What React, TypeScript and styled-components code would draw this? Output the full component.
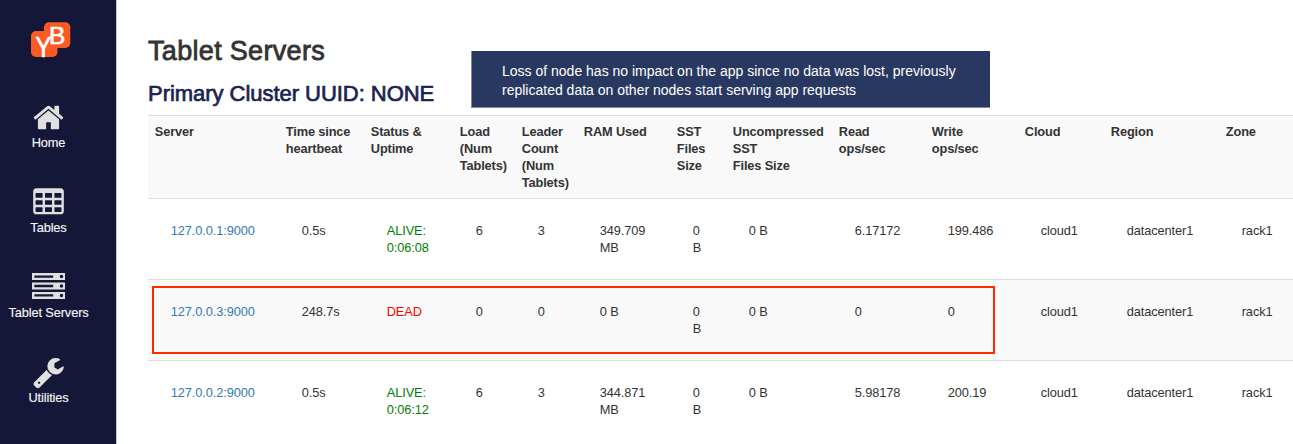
import React from "react";
import styled, { createGlobalStyle } from "styled-components";

const GlobalStyle = createGlobalStyle`
  * { box-sizing: border-box; }
  body {
    margin: 0;
    background: #fff;
    color: #333;
    font: 12.8px/17px "Liberation Sans", Arial, sans-serif;
    letter-spacing: -0.09px;
    overflow: hidden;
  }
`;

const Page = styled.div`
  display: flex;
  height: 444px;
  overflow: hidden;
`;

const Sidebar = styled.nav`
  flex: none;
  width: 117px;
  padding: 20px 19px 0 0;
  background: #141737;
  border-right: 1px solid #c9c9d2;
  display: flex;
  flex-direction: column;
`;

const Logo = styled.svg`
  width: 44px;
  height: 40px;
  margin-left: 29px;
  flex: none;
  overflow: visible;
  letter-spacing: 0;
`;

const NavList = styled.div`
  display: flex;
  flex-direction: column;
  padding-top: 41px;
`;

const NavItem = styled.a`
  height: 85px;
  display: flex;
  flex-direction: column;
  align-items: center;
  color: #f4f4f6;
  white-space: nowrap;
  letter-spacing: -0.12px;
  -webkit-text-stroke: 0.15px currentColor;
`;

const NavIcon = styled.svg`
  width: 33px;
  height: 33px;
  flex: none;
  fill: #e0e0e0;
`;

const Main = styled.main`
  flex: none;
  width: 1176px;
  padding-left: 31px;
`;

const Heading = styled.header`
  position: relative;
  height: 115px;
  padding-top: 34px;
`;

const Title = styled.h1`
  margin: 0;
  font-size: 27px;
  line-height: 34px;
  font-weight: 400;
  letter-spacing: 0.32px;
  color: #333;
  -webkit-text-stroke: 0.8px currentColor;
`;

const Subtitle = styled.h2`
  margin: 12px 0 0;
  font-size: 22px;
  line-height: 28px;
  font-weight: 400;
  letter-spacing: -0.04px;
  color: #1a2350;
  -webkit-text-stroke: 0.7px currentColor;
`;

const Callout = styled.p`
  position: absolute;
  left: 323px;
  top: 51px;
  width: 519px;
  height: 57px;
  margin: 0;
  padding: 11px 0 0 30px;
  background: #293861;
  border-left: 1px solid #8089a5;
  border-bottom: 1px solid #8089a5;
  color: #fff;
  font-size: 14px;
  line-height: 18.5px;
  letter-spacing: 0;
  white-space: pre-line;
`;

const Table = styled.table`
  table-layout: fixed;
  width: 1145px;
  border-collapse: separate;
  border-spacing: 0;
`;

const Row = styled.tr<{ $shaded?: boolean }>`
  position: relative;
  background: ${(p) => (p.$shaded ? "#f9f9f9" : "#fff")};
`;

const HeadCell = styled.th`
  height: 83px;
  padding: 7px 0 7px 6.8px;
  border-top: 1px solid #ddd;
  text-align: left;
  vertical-align: top;
  font-weight: 700;
  letter-spacing: -0.14px;
  white-space: pre;
`;

const Cell = styled.td`
  height: 81px;
  padding: 23px 0 0 22.700px;
  border-top: 1px solid #ddd;
  vertical-align: top;
  white-space: pre;
`;

const ServerLink = styled.a`
  color: #337ab7;
`;

const Status = styled.span<{ $alive: boolean }>`
  color: ${(p) => (p.$alive ? "green" : "red")};
`;

const Highlight = styled.div`
  position: absolute;
  left: 4px;
  top: 7px;
  width: 843px;
  height: 68px;
  border: 2px solid #ff2600;
`;

const HomeIcon = () => (
  <NavIcon viewBox="0 0 1792 1792">
    <path d="M1472 992v480q0 26-19 45t-45 19h-384v-384h-256v384h-384q-26 0-45-19t-19-45v-480q0-1 .5-3t.5-3l575-474 575 474q1 2 1 6zm223-69l-62 74q-8 9-21 11h-3q-13 0-21-7l-692-577-692 577q-12 8-24 7-13-2-21-11l-62-74q-8-10-7-23.500t11-21.500l719-599q32-26 76-26t76 26l244 204v-195q0-14 9-23t23-9h192q14 0 23 9t9 23v408l219 182q10 8 11 21.500t-7 23.500z" />
  </NavIcon>
);

const TableIcon = () => (
  <NavIcon viewBox="0 0 1792 1792">
    <path
      fillRule="evenodd"
      d={
        "M224 128h1344q66 0 113 47t47 113v1088q0 66-47 113t-113 47h-1344q-66 0-113-47t-47-113v-1088q0-66 47-113t113-47z" +
        [192, 704, 1216]
          .flatMap((x) =>
            [384, 768, 1152].map(
              (y) =>
                `M${x + 32} ${y}h320q32 0 32 32v192q0 32-32 32h-320q-32 0-32-32v-192q0-32 32-32z`
            )
          )
          .join("")
      }
    />
  </NavIcon>
);

const ServerIcon = () => (
  <NavIcon viewBox="0 0 1792 1792">
    <path
      fillRule="evenodd"
      d={[110, 622, 1134]
        .map(
          (y) =>
            `M0 ${y}h1792v384h-1792zM128 ${y + 128}v128h1024v-128zM1504 ${y + 192}a96 96 0 1 0 192 0a96 96 0 1 0 -192 0z`
        )
        .join("")}
    />
  </NavIcon>
);

const WrenchIcon = () => (
  <NavIcon viewBox="0 20 1792 1792">
    <path d="M448 1472q0-26-19-45t-45-19-45 19-19 45 19 45 45 19 45-19 19-45zm644-420l-682 682q-37 37-90 37-52 0-91-37l-106-108q-38-36-38-90 0-53 38-91l681-681q39 98 114.500 173.500t173.500 114.500zm634-435q0 39-23 106-47 134-164.500 217.500t-258.500 83.500q-185 0-316.500-131.500t-131.500-316.500 131.500-316.500 316.500-131.500q58 0 121.500 16.500t107.500 46.500q16 11 16 28t-16 28l-293 169v224l193 107q5-3 79-48.500t135.500-81 70.500-35.500q15 0 23.500 10t8.500 25z" />
  </NavIcon>
);

const navItems = [
  { label: "Home", Icon: HomeIcon },
  { label: "Tables", Icon: TableIcon },
  { label: "Tablet Servers", Icon: ServerIcon },
  { label: "Utilities", Icon: WrenchIcon },
];

const columns: { label: string; width: number }[] = [
  { label: "Server", width: 131 },
  { label: "Time since\nheartbeat", width: 85 },
  { label: "Status &\nUptime", width: 89 },
  { label: "Load\n(Num\nTablets)", width: 62 },
  { label: "Leader\nCount\n(Num\nTablets)", width: 62 },
  { label: "RAM Used", width: 93 },
  { label: "SST\nFiles\nSize", width: 56 },
  { label: "Uncompressed\nSST\nFiles Size", width: 106 },
  { label: "Read\nops/sec", width: 93 },
  { label: "Write\nops/sec", width: 93 },
  { label: "Cloud", width: 86 },
  { label: "Region", width: 115 },
  { label: "Zone", width: 74 },
];

const servers = [
  {
    host: "127.0.0.1:9000",
    heartbeat: "0.5s",
    alive: true,
    status: "ALIVE:\n0:06:08",
    stats: ["6", "3", "349.709\nMB", "0\nB", "0 B", "6.17172", "199.486"],
  },
  {
    host: "127.0.0.3:9000",
    heartbeat: "248.7s",
    alive: false,
    status: "DEAD",
    stats: ["0", "0", "0 B", "0\nB", "0 B", "0", "0"],
  },
  {
    host: "127.0.0.2:9000",
    heartbeat: "0.5s",
    alive: true,
    status: "ALIVE:\n0:06:12",
    stats: ["6", "3", "344.871\nMB", "0\nB", "0 B", "5.98178", "200.19"],
  },
];

const location = ["cloud1", "datacenter1", "rack1"];

export default function App() {
  return (
    <Page>
      <GlobalStyle />
      <Sidebar>
        <Logo viewBox="29 20 44 40" fontFamily="Liberation Sans" fill="#fff">
          <rect x="31" y="31" width="26.500" height="26" rx="5" fill="#fb5a22" />
          <rect x="44" y="22.300" width="26.300" height="25.700" rx="5" fill="#fb5a22" />
          <text
            fontSize="29"
            stroke="#fff"
            strokeWidth="0.700"
            transform="translate(35.500 56.500) scale(0.820 1)"
          >
            Y
          </text>
          <text x="49" y="43.500" fontSize="24.500" stroke="#fff" strokeWidth="0.600">
            B
          </text>
        </Logo>
        <NavList>
          {navItems.map(({ label, Icon }) => (
            <NavItem key={label}>
              <Icon />
              {label}
            </NavItem>
          ))}
        </NavList>
      </Sidebar>
      <Main>
        <Heading>
          <Title>Tablet Servers</Title>
          <Subtitle>Primary Cluster UUID: NONE</Subtitle>
          <Callout>
            {
              "Loss of node has no impact on the app since no data was lost, previously\nreplicated data on other nodes start serving app requests"
            }
          </Callout>
        </Heading>
        <Table>
          <colgroup>
            {columns.map((c) => (
              <col key={c.label} width={c.width} />
            ))}
          </colgroup>
          <thead>
            <Row $shaded>
              {columns.map((c) => (
                <HeadCell key={c.label}>{c.label}</HeadCell>
              ))}
            </Row>
          </thead>
          <tbody>
            {servers.map((s) => (
              <Row key={s.host} $shaded={!s.alive}>
                <Cell>
                  <ServerLink>{s.host}</ServerLink>
                  {!s.alive && <Highlight />}
                </Cell>
                <Cell>{s.heartbeat}</Cell>
                <Cell>
                  <Status $alive={s.alive}>{s.status}</Status>
                </Cell>
                {[...s.stats, ...location].map((value, i) => (
                  <Cell key={i}>{value}</Cell>
                ))}
              </Row>
            ))}
          </tbody>
        </Table>
      </Main>
    </Page>
  );
}
